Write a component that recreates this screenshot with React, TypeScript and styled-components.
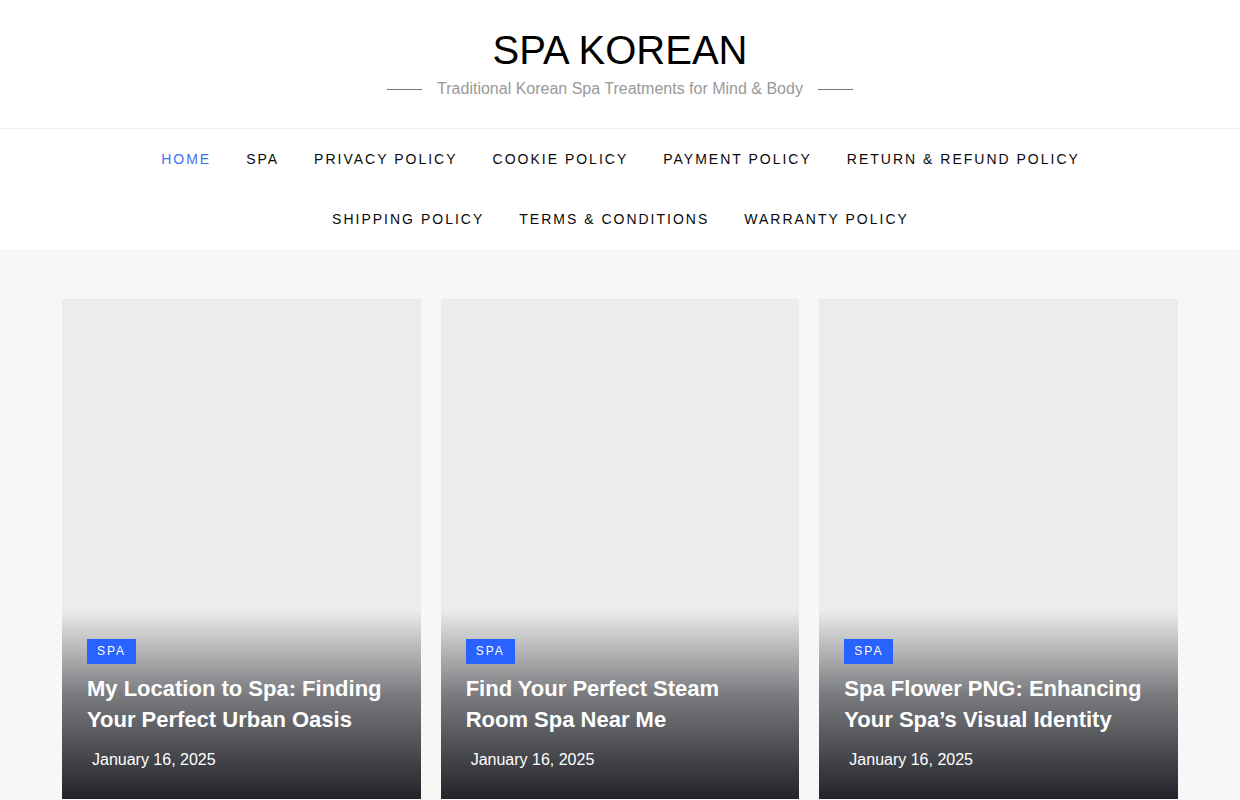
import { createGlobalStyle } from 'styled-components'
import styled from 'styled-components'

const GlobalStyle = createGlobalStyle`
  body {
    margin: 0;
    background: #f7f7f7;
    font-family: "Liberation Sans", Arial, sans-serif;
  }
`

const navItems = [
  'Home',
  'Spa',
  'Privacy Policy',
  'Cookie Policy',
  'Payment Policy',
  'Return & Refund Policy',
  'Shipping Policy',
  'Terms & Conditions',
  'Warranty Policy'
]

const posts = [
  { title: 'My Location to Spa: Finding Your Perfect Urban Oasis' },
  { title: 'Find Your Perfect Steam Room Spa Near Me' },
  { title: 'Spa Flower PNG: Enhancing Your Spa\u2019s Visual Identity' }
]

export default function App() {
  return (
    <>
      <GlobalStyle />
      <Header>
        <SiteTitle>SPA KOREAN</SiteTitle>
        <Tagline>
          <Rule />
          <span>Traditional Korean Spa Treatments for Mind &amp; Body</span>
          <Rule />
        </Tagline>
      </Header>
      <NavBar>
        <NavList>
          {navItems.map((item, i) => (
            <NavItem key={item} $active={i === 0}>
              {item}
            </NavItem>
          ))}
        </NavList>
      </NavBar>
      <Main>
        <Grid>
          {posts.map((post) => (
            <Card key={post.title}>
              <CardBody>
                <Badge>Spa</Badge>
                <PostTitle>{post.title}</PostTitle>
                <PostDate>January 16, 2025</PostDate>
              </CardBody>
            </Card>
          ))}
        </Grid>
      </Main>
    </>
  )
}

const Header = styled.header`
  background: #ffffff;
  padding: 27px 0 27px;
  text-align: center;
  border-bottom: 1px solid #eeeeee;
`
const SiteTitle = styled.div`
  font-size: 40px;
  line-height: 46px;
  color: #000000;
`
const Tagline = styled.div`
  margin-top: 4px;
  display: flex;
  justify-content: center;
  align-items: center;
  gap: 15px;
  font-size: 16px;
  line-height: 24px;
  color: #999999;
`
const Rule = styled.span`
  width: 35px;
  height: 1px;
  background: #777777;
`
const NavBar = styled.nav`
  background: #ffffff;
`
const NavList = styled.ul`
  list-style: none;
  margin: 0 auto;
  padding: 0;
  max-width: 1116px;
  display: flex;
  flex-wrap: wrap;
  justify-content: center;
`
const NavItem = styled.li<{ $active?: boolean }>`
  padding: 0 17px 0 18px;
  line-height: 60px;
  font-size: 14px;
  letter-spacing: 2px;
  text-transform: uppercase;
  color: ${(p) => (p.$active ? '#3f72f2' : '#0a0a0a')};
`
const Main = styled.main`
  padding-top: 50px;
`
const Grid = styled.div`
  max-width: 1116px;
  margin: 0 auto;
  display: grid;
  grid-template-columns: repeat(3, 1fr);
  gap: 20px;
`
const Card = styled.article`
  height: 500px;
  background: #ececec;
  display: flex;
  flex-direction: column;
  justify-content: flex-end;
`
const CardBody = styled.div`
  padding: 29px 25px 27px;
  background: linear-gradient(
    180deg,
    rgba(28, 29, 36, 0) 0%,
    rgba(28, 29, 36, 0.55) 45%,
    rgba(28, 29, 36, 0.97) 100%
  );
`
const Badge = styled.span`
  display: inline-block;
  height: 25px;
  line-height: 25px;
  padding: 0 10px;
  background: #2962ff;
  color: #ffffff;
  font-size: 12px;
  letter-spacing: 2px;
  text-transform: uppercase;
`
const PostTitle = styled.h2`
  margin: 9px 0 0;
  font-size: 22px;
  line-height: 31px;
  font-weight: bold;
  color: #ffffff;
`
const PostDate = styled.div`
  margin-top: 13px;
  padding-left: 5px;
  font-size: 16px;
  line-height: 24px;
  color: #ffffff;
`
